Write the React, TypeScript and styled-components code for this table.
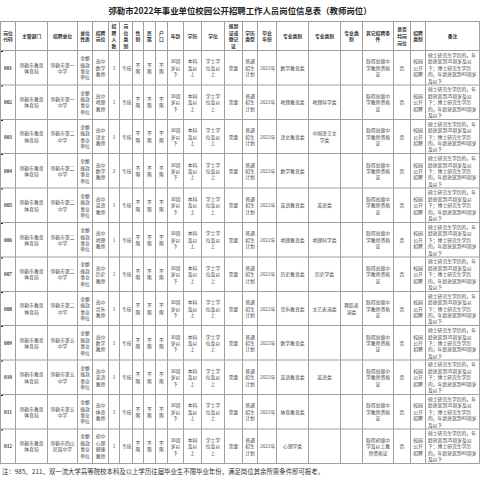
import React from "react";
import styled, {createGlobalStyle} from "styled-components";

// The sheet is laid out at twice its size and scaled down, so the tiny
// cell text is not clamped by the browser's minimum font size.
const GlobalStyle = createGlobalStyle`
	html, body {
		margin: 0;
		padding: 0;
		background: #fff;
		overflow: hidden;
	}
	body {
		font-family: "Noto Sans CJK SC", "Noto Sans", sans-serif;
		color: #444;
	}
`;

const Viewport = styled.div`
	width: 480px;
	height: 480px;
	overflow: hidden;
`;

const Sheet = styled.div`
	width: 960px;
	height: 960px;
	transform: scale(0.5);
	transform-origin: 0 0;
	display: flex;
	flex-direction: column;
`;

const Title = styled.h1`
	margin: 0;
	height: 42px;
	display: flex;
	align-items: center;
	justify-content: center;
	font-size: 16.8px;
	font-weight: 700;
	color: #222;
`;

const Table = styled.table`
	width: 958px;
	table-layout: fixed;
	border-collapse: collapse;
`;

const HeadCell = styled.th`
	border: 2px solid #a0a0a0;
	padding: 0 4px;
	height: 56px;
	font-size: 9.6px;
	line-height: 1.4;
	font-weight: 700;
	color: #333;
	text-align: center;
	vertical-align: middle;
	word-break: break-all;
`;

const Cell = styled.td<{$align?: string; $nowrap?: boolean; $code?: boolean}>`
	position: relative;
	border: 2px solid #a0a0a0;
	padding: 0 4px;
	height: 66.8px;
	font-size: ${({$code}) => ($code ? "10.8px" : "9.6px")};
	font-family: ${({$code}) =>
		$code ? `"Liberation Serif", "Noto Sans CJK SC", serif` : "inherit"};
	font-weight: ${({$code}) => ($code ? 700 : 400)};
	line-height: 1.34;
	text-align: ${({$align = "center"}) => $align};
	vertical-align: middle;
	word-break: break-all;
	white-space: ${({$nowrap}) => ($nowrap ? "nowrap" : "normal")};
	overflow: hidden;
	${({$code}) =>
		$code &&
		`
		&::before {
			content: "";
			position: absolute;
			left: 0;
			top: -2px;
			width: 4px;
			height: 4px;
			background: #222;
		}
	`}
`;

const Note = styled.p`
	margin: 0;
	padding: 5px 4px 0;
	font-size: 12.8px;
	color: #333;
	white-space: nowrap;
`;

const widths = [15, 32, 30, 15, 16, 11, 13, 11, 12, 12, 16, 18, 23, 18, 15, 19, 32, 32, 22, 31, 17, 15, 54];

const headers = [
	"岗位代码",
	"主管部门",
	"招聘单位",
	"单位性质",
	"招聘岗位",
	"招聘人数",
	"岗位类别",
	"性别",
	"民族",
	"户口",
	"年龄",
	"学历",
	"学位",
	"报到证或登记证",
	"学历类型",
	"毕业年份",
	"专业类别",
	"专业类别",
	"专业类别",
	"其它招聘条件",
	"是否特岗岗位",
	"招聘类别",
	"备注"
];

interface Post {
	code: string;
	school: string;
	post: string;
	count: number;
	major1: string;
	major2?: string;
	major3?: string;
	cert?: string;
}

const posts: Post[] = [
	{code: "001", school: "弥勒市第一中学", post: "高中数学教师", count: 1, major1: "数学教育类"},
	{code: "002", school: "弥勒市第一中学", post: "高中地理教师", count: 1, major1: "地理教育类", major2: "地理科学类"},
	{code: "003", school: "弥勒市第二中学", post: "高中语文教师", count: 1, major1: "语文教育类", major2: "中国语言文学类"},
	{code: "004", school: "弥勒市第二中学", post: "高中数学教师", count: 2, major1: "数学教育类"},
	{code: "005", school: "弥勒市第二中学", post: "高中英语教师", count: 1, major1: "英语教育类", major2: "英语类"},
	{code: "006", school: "弥勒市第二中学", post: "高中地理教师", count: 1, major1: "地理教育类", major2: "地理科学类"},
	{code: "007", school: "弥勒市第二中学", post: "高中历史教师", count: 1, major1: "历史教育类", major2: "历史学类"},
	{
		code: "008",
		school: "弥勒市第二中学",
		post: "高中音乐教师",
		count: 1,
		major1: "音乐教育类",
		major2: "文艺表演类",
		major3: "舞蹈表演类"
	},
	{code: "009", school: "弥勒市第五中学", post: "高中数学教师", count: 1, major1: "数学教育类"},
	{code: "010", school: "弥勒市第五中学", post: "高中英语教师", count: 1, major1: "英语教育类", major2: "英语类"},
	{code: "011", school: "弥勒市第五中学", post: "高中体育教师", count: 1, major1: "体育教育类"},
	{
		code: "012",
		school: "弥勒市西山民族中学",
		post: "初中心理健康教师",
		count: 1,
		major1: "心理学类",
		cert: "取得初级中学及以上教师资格证"
	}
];

const REMARK = "硕士研究生学历的，年龄放宽到35周岁及以下；博士研究生学历的，年龄放宽到40周岁及以下";

const PostRow: React.FC<{post: Post}> = ({post}) => (
	<tr>
		<Cell $code>{post.code}</Cell>
		<Cell>弥勒市教育体育局</Cell>
		<Cell>{post.school}</Cell>
		<Cell>全额拨款事业单位</Cell>
		<Cell>{post.post}</Cell>
		<Cell>{post.count}</Cell>
		<Cell $nowrap>专技</Cell>
		<Cell>不限</Cell>
		<Cell>不限</Cell>
		<Cell>不限</Cell>
		<Cell>30周岁以下</Cell>
		<Cell>本科及以上</Cell>
		<Cell>学士学位及以上</Cell>
		<Cell>需要</Cell>
		<Cell>普通招生计划</Cell>
		<Cell $nowrap>2022年</Cell>
		<Cell>{post.major1}</Cell>
		<Cell>{post.major2 ?? ""}</Cell>
		<Cell>{post.major3 ?? ""}</Cell>
		<Cell>{post.cert ?? "取得高级中学教师资格证"}</Cell>
		<Cell>否</Cell>
		<Cell>校园公开招聘</Cell>
		<Cell $align="left">{REMARK}</Cell>
	</tr>
);

export default function App() {
	return (
		<Viewport>
			<GlobalStyle />
			<Sheet>
				<Title>弥勒市2022年事业单位校园公开招聘工作人员岗位信息表（教师岗位）</Title>
				<Table>
					<colgroup>
						{widths.map((w, i) => (
							<col key={i} style={{width: w * 2}} />
						))}
					</colgroup>
					<thead>
						<tr>
							{headers.map((h, i) => (
								<HeadCell key={i}>{h}</HeadCell>
							))}
						</tr>
					</thead>
					<tbody>
						{posts.map((p) => (
							<PostRow key={p.code} post={p} />
						))}
					</tbody>
				</Table>
				<Note>注：985、211、双一流大学高等院校本科及以上学历往届毕业生不限毕业年份，满足岗位其余所需条件即可报考。</Note>
			</Sheet>
		</Viewport>
	);
}
